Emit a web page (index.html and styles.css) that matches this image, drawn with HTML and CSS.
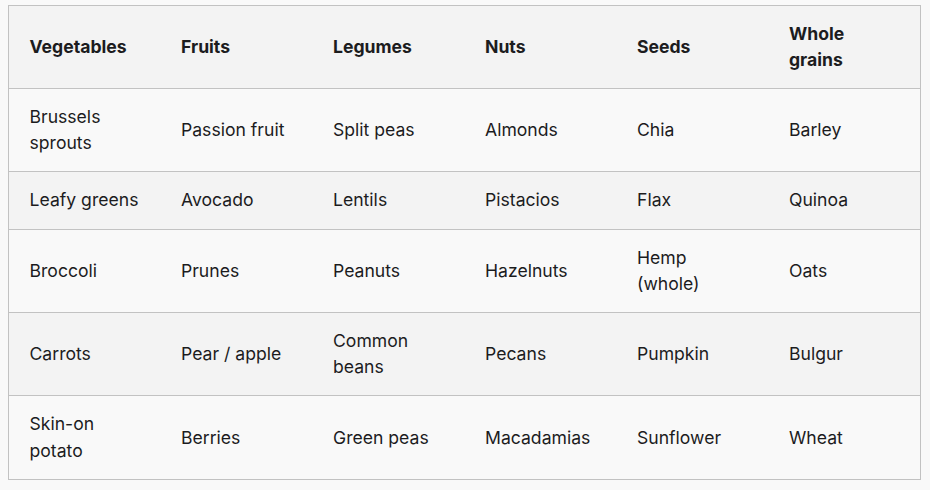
FILE: index.html
```html
<!DOCTYPE html>
<html lang="en">
<head>
<meta charset="utf-8">
<title>Food groups</title>
<link rel="stylesheet" href="styles.css">
</head>
<body>
<table class="food-table">
  <thead>
    <tr>
      <th>Vegetables</th>
      <th>Fruits</th>
      <th>Legumes</th>
      <th>Nuts</th>
      <th>Seeds</th>
      <th>Whole grains</th>
    </tr>
  </thead>
  <tbody>
    <tr>
      <td>Brussels sprouts</td>
      <td>Passion fruit</td>
      <td>Split peas</td>
      <td>Almonds</td>
      <td>Chia</td>
      <td>Barley</td>
    </tr>
    <tr>
      <td>Leafy greens</td>
      <td>Avocado</td>
      <td>Lentils</td>
      <td>Pistacios</td>
      <td>Flax</td>
      <td>Quinoa</td>
    </tr>
    <tr>
      <td>Broccoli</td>
      <td>Prunes</td>
      <td>Peanuts</td>
      <td>Hazelnuts</td>
      <td>Hemp (whole)</td>
      <td>Oats</td>
    </tr>
    <tr>
      <td>Carrots</td>
      <td>Pear / apple</td>
      <td>Common beans</td>
      <td>Pecans</td>
      <td>Pumpkin</td>
      <td>Bulgur</td>
    </tr>
    <tr>
      <td>Skin-on potato</td>
      <td>Berries</td>
      <td>Green peas</td>
      <td>Macadamias</td>
      <td>Sunflower</td>
      <td>Wheat</td>
    </tr>
  </tbody>
</table>
</body>
</html>
```
FILE: styles.css
```css
html, body {
  margin: 0;
  background: #f9f9f9;
}
body {
  padding: 5px 9px 0 8px;
  font-family: Inter, "Noto Sans", sans-serif;
  color: #1c1c1e;
}
.food-table {
  width: 913px;
  border-collapse: collapse;
  table-layout: fixed;
  border: 1px solid #c2c2c2;
  font-size: 17.6px;
  line-height: 26.2px;
}
.food-table th,
.food-table td {
  text-align: left;
  vertical-align: middle;
  padding: 15px 20px 15px 20.5px;
  border-top: 1px solid #c2c2c2;
}
.food-table th {
  font-weight: 700;
  line-height: 26px;
}
.food-table thead tr {
  background: #f3f3f3;
}
.food-table tbody tr:nth-child(odd) {
  background: #f9f9f9;
}
.food-table tbody tr:nth-child(even) {
  background: #f3f3f3;
}
```
